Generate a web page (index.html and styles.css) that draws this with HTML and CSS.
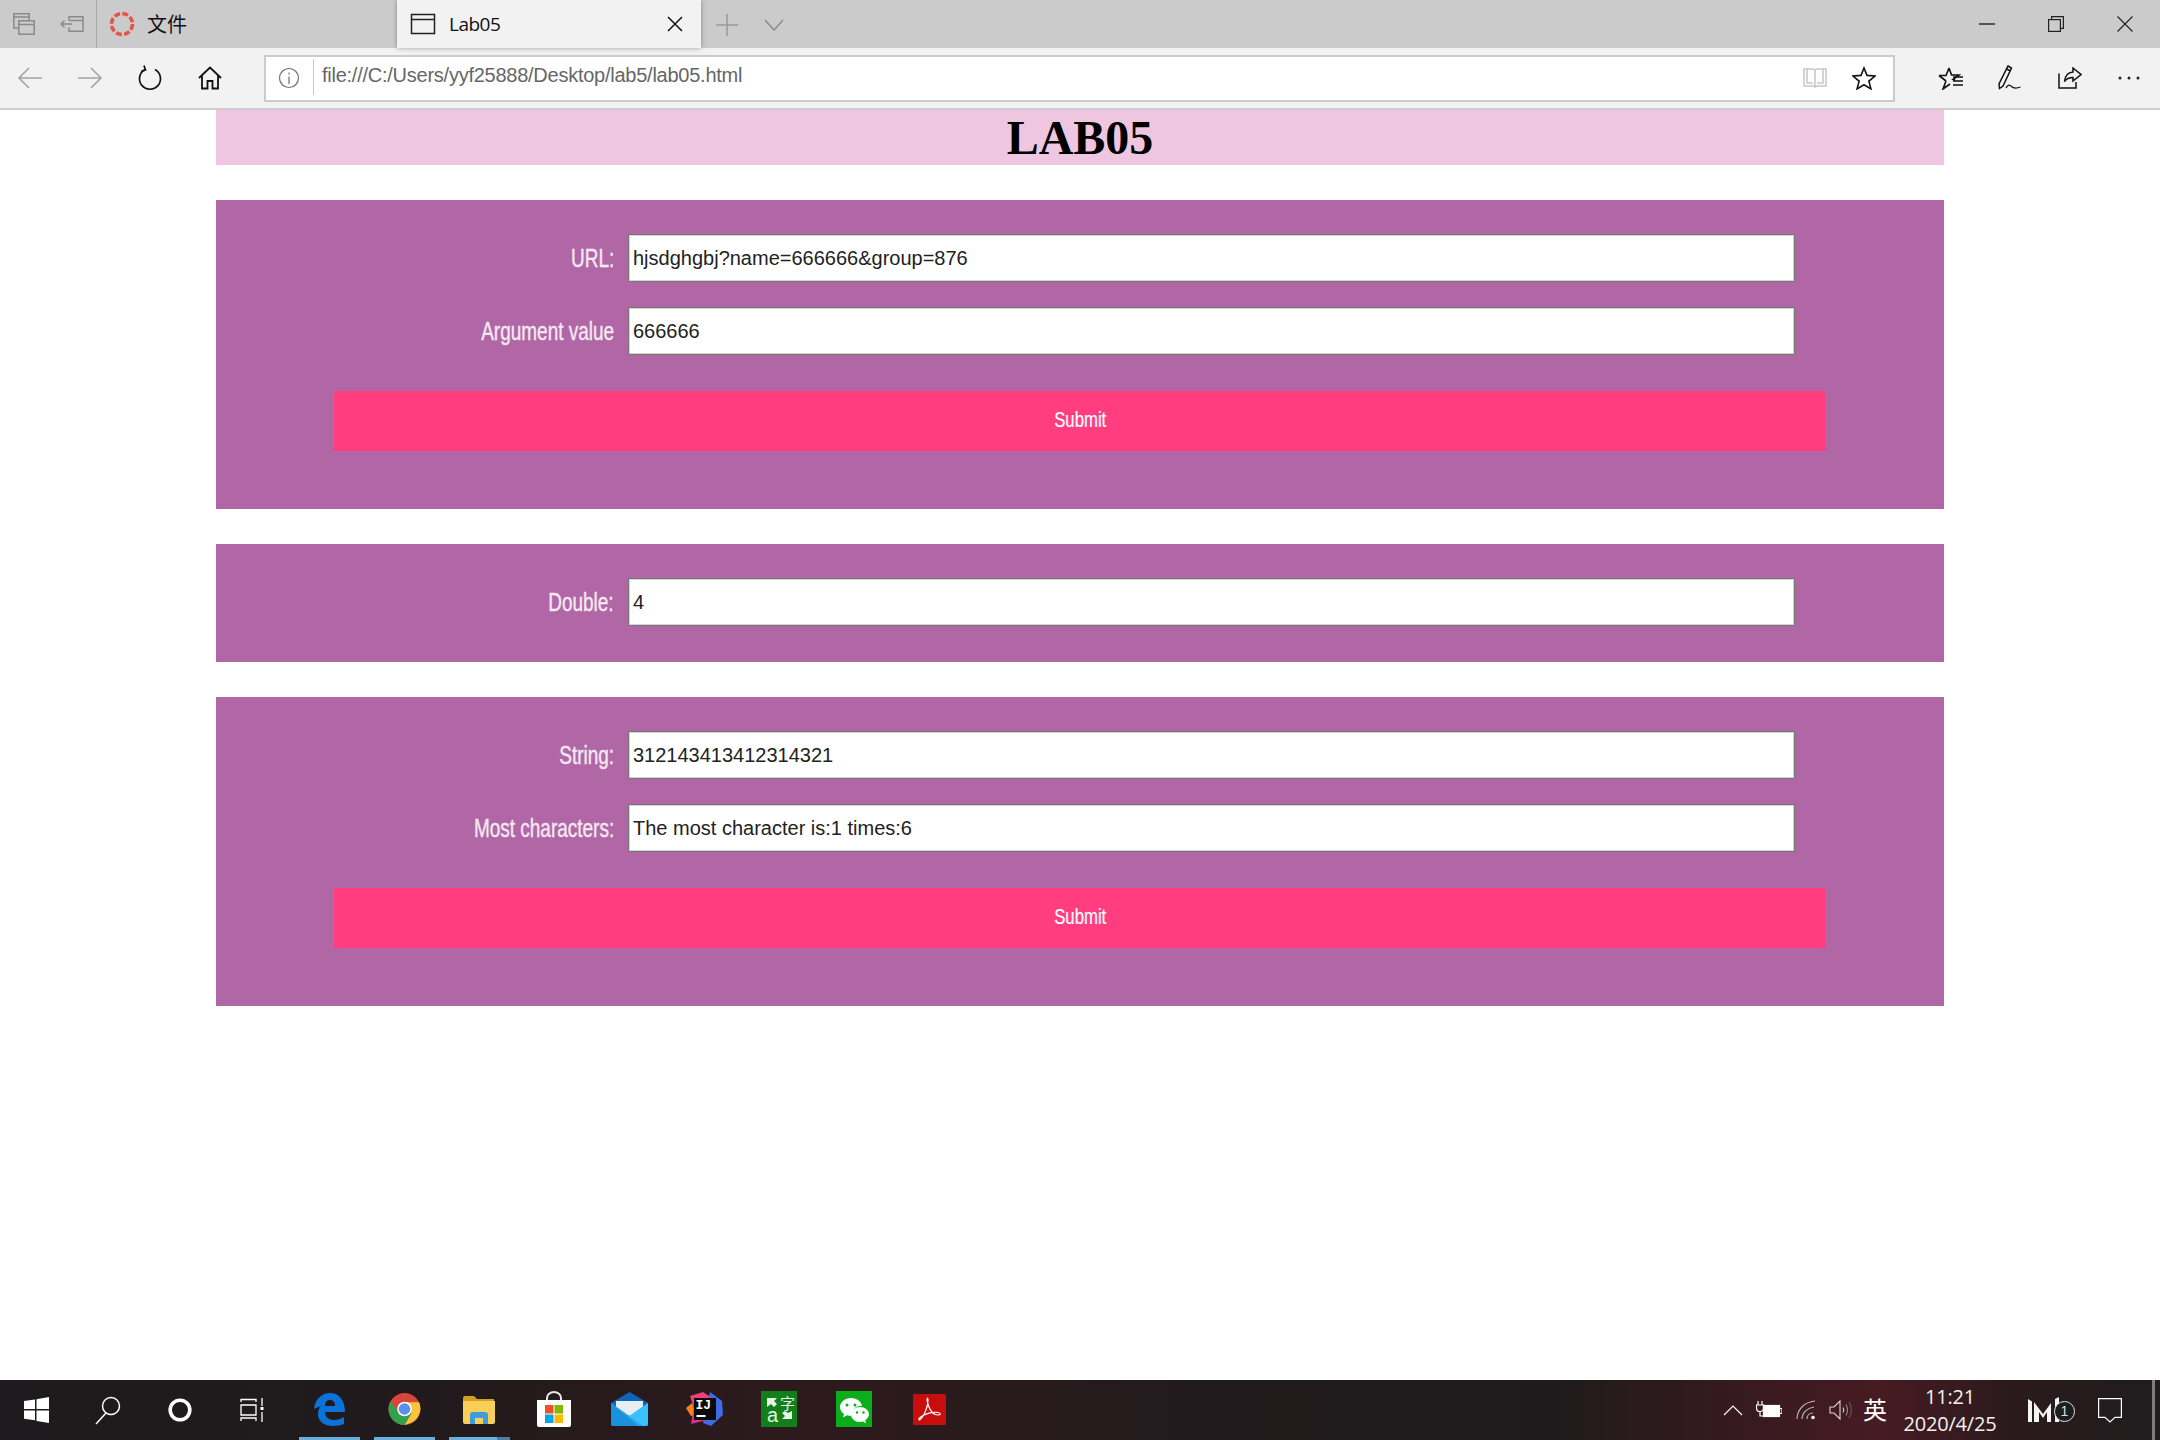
FILE: index.html
```html
<!DOCTYPE html>
<html lang="en">
<head>
<meta charset="utf-8">
<title>Lab05</title>
<link rel="stylesheet" href="styles.css">
</head>
<body>
<div class="tabstrip">
  <div class="strip-btn"><svg width="22" height="22" viewBox="0 0 22 22" fill="none" stroke="#8a8a8a" stroke-width="1.500"><path d="M5 15H.8V.8h15.400V7M.8 4h15.400"/><rect x="5.800" y="7.800" width="15.400" height="13.400"/><path d="M5.800 11.500h15.400"/></svg></div>
  <div class="strip-btn"><svg width="24" height="16" viewBox="0 0 24 16" fill="none" stroke="#8a8a8a" stroke-width="1.500"><path d="M9 4.500V.8h14v14.400H9V11.500M9 4.500h14M1 8h11M4.500 4.500L1 8l3.500 3.500"/></svg></div>
  <div class="tab-idle">
    <svg class="spin" width="26" height="26" viewBox="0 0 26 26" fill="none"><circle cx="13" cy="13" r="10.500" stroke="#e5534b" stroke-width="3.600" stroke-dasharray="6 2.250"/></svg>
    <span class="tab-title-cjk">文件</span>
  </div>
  <div class="tab-active">
    <svg width="26" height="22" viewBox="0 0 26 22" fill="none" stroke="#222" stroke-width="1.500"><rect x="1.500" y="1.500" width="23" height="19"/><path d="M1.500 6.500h23"/></svg>
    <span class="tab-title">Lab05</span>
    <svg class="tab-x" width="16" height="16" viewBox="0 0 16 16" stroke="#111" stroke-width="1.500"><path d="M1 1l14 14M15 1L1 15"/></svg>
  </div>
  <div class="strip-new strip-plus"><svg width="22" height="22" viewBox="0 0 22 22" stroke="#999" stroke-width="1.500"><path d="M11 0v22M0 11h22"/></svg></div>
  <div class="strip-new"><svg width="20" height="12" viewBox="0 0 20 12" fill="none" stroke="#8a8a8a" stroke-width="1.400"><path d="M1 1l9 10 9-10"/></svg></div>
  <div class="strip-fill"></div>
  <div class="win-btn"><svg width="16" height="2" viewBox="0 0 16 2" stroke="#222" stroke-width="1.400"><path d="M0 1h16"/></svg></div>
  <div class="win-btn"><svg width="16" height="16" viewBox="0 0 16 16" fill="none" stroke="#222" stroke-width="1.200"><rect x=".6" y="3.600" width="11.800" height="11.800"/><path d="M3.600 3.600V.6h11.800v11.800h-3"/></svg></div>
  <div class="win-btn win-last"><svg width="16" height="16" viewBox="0 0 16 16" stroke="#222" stroke-width="1.200"><path d="M.5.5l15 15M15.500.5l-15 15"/></svg></div>
</div>

<div class="toolbar">
  <div class="nav-btn"><svg width="26" height="24" viewBox="0 0 26 24" fill="none" stroke="#a3a3a3" stroke-width="1.600"><path d="M25 12H2M12 2L2 12l10 10"/></svg></div>
  <div class="nav-btn"><svg width="26" height="24" viewBox="0 0 26 24" fill="none" stroke="#a3a3a3" stroke-width="1.600"><path d="M1 12h23M14 2l10 10-10 10"/></svg></div>
  <div class="nav-btn"><svg width="26" height="26" viewBox="0 0 26 26" fill="none" stroke="#111" stroke-width="1.700"><path d="M8 4.500a10.500 10.500 0 1 0 10 0"/><path d="M7 0.500l1.500 4.500L4 6.500"/></svg></div>
  <div class="nav-btn"><svg width="24" height="24" viewBox="0 0 24 24" fill="none" stroke="#111" stroke-width="1.800"><path d="M1 12L12 1.500 23 12M4 10v12.500h5.500V15h5v7.500H20V10"/></svg></div>
  <div class="address">
    <svg class="info" width="22" height="22" viewBox="0 0 22 22" fill="none" stroke="#6e6e6e" stroke-width="1.200"><circle cx="11" cy="11" r="9.500"/><path d="M11 9.500V17M11 5.500v2"/></svg>
    <div class="addr-div"></div>
    <span class="url">file:///C:/Users/yyf25888/Desktop/lab5/lab05.html</span>
    <svg class="book" width="24" height="20" viewBox="0 0 24 20" fill="none" stroke="#c6c6c6" stroke-width="1.500"><path d="M1 1h9.500L12 2.500 13.500 1H23v17h-9l-2 1-2-1H1zM12 2.500V19M4 1v14h6M20 1v14h-6"/></svg>
    <svg class="star" width="24" height="24" viewBox="0 0 24 24" fill="none" stroke="#111" stroke-width="1.600"><path d="M12 2l3 7.400 8 .6-6.100 5.100 2 7.800L12 18.700l-6.900 4.200 2-7.800L1 10l8-.6z"/></svg>
  </div>
  <div class="tools">
    <div class="tool-btn"><svg width="26" height="24" viewBox="0 0 26 24" fill="none" stroke="#111" stroke-width="1.600"><path d="M11 2l2.500 7H21l-6 4.500 2 .5M8 15l-3 8 7-5M1 9.500h7L11 2M1 9.500l7 5.500M15 11h10M15 15h10M15 19h10"/></svg></div>
    <div class="tool-btn"><svg width="24" height="26" viewBox="0 0 24 26" fill="none" stroke="#111" stroke-width="1.500"><path d="M10 1l3.500 2L5 21l-3.500 2.500L1 19zM8 3.500l3.500 2"/><path d="M8 23c2-3.500 3.500-3.500 5.500-1.500s4 2.500 9 .5" stroke-width="1.300"/></svg></div>
    <div class="tool-btn"><svg width="24" height="22" viewBox="0 0 24 22" fill="none" stroke="#111" stroke-width="1.500"><path d="M1 6.500V21h17v-6"/><path d="M15 1l8 6.500-8 6.500v-3.500c-4 0-6.500 1-8.500 4 .5-6 3.500-9 8.500-9.500z"/></svg></div>
    <div class="tool-btn"><svg width="22" height="4" viewBox="0 0 22 4" fill="#222"><circle cx="2" cy="2" r="1.500"/><circle cx="11" cy="2" r="1.500"/><circle cx="20" cy="2" r="1.500"/></svg></div>
  </div>
</div>
<div class="chrome-line"></div>

<main class="page">
  <h1 class="title">LAB05</h1>

  <section class="panel">
    <div class="row"><label class="lbl"><span class="cond">URL:</span></label><input class="field" type="text" value="hjsdghgbj?name=666666&amp;group=876"></div>
    <div class="row row-next"><label class="lbl"><span class="cond">Argument value</span></label><input class="field" type="text" value="666666"></div>
    <div class="submit"><span class="cond-btn">Submit</span></div>
  </section>

  <section class="panel panel-short">
    <div class="row"><label class="lbl"><span class="cond">Double:</span></label><input class="field" type="text" value="4"></div>
  </section>

  <section class="panel">
    <div class="row"><label class="lbl"><span class="cond">String:</span></label><input class="field" type="text" value="312143413412314321"></div>
    <div class="row row-next"><label class="lbl"><span class="cond">Most characters:</span></label><input class="field" type="text" value="The most character is:1 times:6"></div>
    <div class="submit"><span class="cond-btn">Submit</span></div>
  </section>
</main>

<footer class="taskbar">
  <div class="sys-btn"><svg width="25" height="26" viewBox="0 0 25 26" fill="#fff"><path d="M0 4l11-1.600V12H0zM12.500 2.200L25 0v12H12.500zM0 13.500h11v9.700L0 21.700zM12.500 13.500H25V26l-12.500-2z"/></svg></div>
  <div class="sys-btn"><svg width="26" height="30" viewBox="0 0 26 30" fill="none" stroke="#fff" stroke-width="1.500"><circle cx="16" cy="11" r="8.500"/><path d="M11 18L1 29"/></svg></div>
  <div class="sys-btn"><svg width="24" height="24" viewBox="0 0 24 24" fill="none" stroke="#fff" stroke-width="3.600"><circle cx="12" cy="12" r="9.800"/></svg></div>
  <div class="sys-btn"><svg width="24" height="24" viewBox="0 0 24 24" fill="none" stroke="#fff" stroke-width="1.300"><path d="M1 4V1.500h15V4M1 7h15v10H1zM1 23v-3h15v3M22 0v8M22 14v10"/><rect x="20.500" y="9" width="3" height="3" fill="#fff" stroke="none"/></svg></div>
  <div class="apps">
    <div class="app on"><svg width="31" height="33" viewBox="0 0 31 33"><path fill="#0b72d8" fill-rule="evenodd" d="M0 16C1 6 8 0 16 0c9 0 15 7 15 19H11c0 6 5 8 9 8 4 0 7-1 10-3v7c-3 1-6 2-11 2C9 33 3 27 4 19c1-3 1-4 3-6-3 1-5 2-7 3zM11 13h10c0-4-2-6-5-6s-5 2-5 6z"/></svg></div>
    <div class="app on"><svg width="33" height="34" viewBox="0 0 34 34"><circle cx="17" cy="17" r="16.500" fill="#d8453a"/><path fill="#f6c53b" d="M17 10h15a16.500 16.500 0 0 1-7.500 21L17 33.500l7-12z"/><path fill="#30a24e" d="M2.500 9.200A16.500 16.500 0 0 0 17 33.500l7-12-7 2a7 7 0 0 1-6-3.500z"/><circle cx="17" cy="17" r="7.500" fill="#fff"/><circle cx="17" cy="17" r="6" fill="#5a8fef"/></svg></div>
    <div class="app on on-split"><svg width="34" height="29" viewBox="0 0 34 29"><path fill="#d59f1e" d="M1 3a2 2 0 0 1 2-2h9l3 3h17v5H1z"/><path fill="#f8cf58" d="M1 6h32v21a2 2 0 0 1-2 2H3a2 2 0 0 1-2-2z"/><path fill="#3f9bdc" d="M8 29V20a3 3 0 0 1 3-3h12a3 3 0 0 1 3 3v9h-5v-6h-8v6z"/></svg></div>
    <div class="app"><svg width="36" height="36" viewBox="0 0 36 36"><path fill="none" stroke="#e8e8e8" stroke-width="2" d="M11 10V7a7 6 0 0 1 14 0v3"/><path fill="#fff" d="M1 9h34v25a2 2 0 0 1-2 2H3a2 2 0 0 1-2-2z"/><rect x="9" y="14" width="8.500" height="8.500" fill="#f25022"/><rect x="18.500" y="14" width="8.500" height="8.500" fill="#7fba00"/><rect x="9" y="23.500" width="8.500" height="8.500" fill="#00a4ef"/><rect x="18.500" y="23.500" width="8.500" height="8.500" fill="#ffb900"/></svg></div>
    <div class="app"><svg width="37" height="34" viewBox="0 0 37 34"><path fill="#0d66b8" d="M0 11L18.500 0 37 11v6H0z"/><path fill="#e9edf2" d="M5 9h27v10L18.500 24 5 19z"/><path fill="#2aa6ec" d="M0 11l18.500 13L37 11v21a2 2 0 0 1-2 2H2a2 2 0 0 1-2-2z"/><path fill="#37c2fb" d="M37 11v21a2 2 0 0 1-2 2h-3L15 22l3.500 2z"/><path fill="#1484d6" d="M0 32V11l27 23H2a2 2 0 0 1-2-2z" opacity=".65"/></svg></div>
    <div class="app"><svg width="37" height="36" viewBox="0 0 37 36"><path fill="#ef3f7c" d="M4 5l13-4 9 6-8 10-9 3z"/><path fill="#f58220" d="M0 17l6-5 5 14-6-1z"/><path fill="#3f6be6" d="M24 1l12 9 1 14-12 11-8-3z"/><path fill="#dd2e8c" d="M5 33l4-22 12 18z"/><rect x="8" y="7" width="22" height="22" fill="#0b0b0d"/><text x="9.500" y="17.500" class="idea-txt">IJ</text><rect x="10.500" y="24" width="9" height="2" fill="#fff"/></svg></div>
    <div class="app"><svg width="36" height="36" viewBox="0 0 36 36"><rect width="36" height="36" fill="#127f1a"/><path fill="#e6f2e6" d="M6 7h10l-3 3 3 3-3 3-3-3-4 3zM31 28H21l3-3-3-3 3-2 3 2 4-2z"/><text x="19" y="18" class="tile-cjk">字</text><text x="6" y="31" class="tile-a">a</text></svg></div>
    <div class="app"><svg width="36" height="36" viewBox="0 0 36 36"><rect width="36" height="36" fill="#0aae1b"/><path fill="#fff" d="M15 7C9 7 4 11 4 16c0 3 1.500 5 4 7l-1 3.500 4-2.200c1.500.4 3 .7 5 .5-1-5 3-10 10-10C25 10 20 7 15 7z"/><path fill="#fff" d="M24 16c-5 0-9 3.300-9 7.500s4 7.500 9 7.500c1 0 2-.2 3-.5l3 1.700-.8-3c2-1.500 3.800-3.500 3.800-5.700 0-4.200-4-7.500-9-7.500z"/><circle cx="11" cy="14" r="1.500" fill="#0aae1b"/><circle cx="19" cy="14" r="1.500" fill="#0aae1b"/><circle cx="21" cy="21.500" r="1.200" fill="#0aae1b"/><circle cx="27.500" cy="21.500" r="1.200" fill="#0aae1b"/></svg></div>
    <div class="app"><svg width="33" height="31" viewBox="0 0 33 31"><rect width="33" height="31" rx="1" fill="#c80d0d"/><path fill="none" stroke="#fff" stroke-width="1.200" d="M15 4c-1.500 0 -1 4 1 9 2 5 5 8 9 8 3 0 3-2 0-2.500-5-1-13 1-18 5-2 2-1 3 0 2 4-3 8-13 8-19 0-2-.500-2.500 0-2.500z"/></svg></div>
  </div>
  <div class="tray">
    <div class="tray-item tray-caret"><svg width="20" height="11" viewBox="0 0 20 11" fill="none" stroke="#fff" stroke-width="1.200"><path d="M1 10l9-9 9 9"/></svg></div>
    <div class="tray-item tray-bat"><svg width="26" height="18" viewBox="0 0 26 18" fill="none" stroke="#fff" stroke-width="1.200"><path d="M2 0v4M6 0v4M.500 4h7v3a3.500 3.500 0 0 1-7 0zM4 10v5h4"/><rect x="7.500" y="4.500" width="16" height="11" fill="#fff"/><path d="M24 7.500h2v5h-2"/></svg></div>
    <div class="tray-item tray-wifi"><svg width="20" height="20" viewBox="0 0 20 20" fill="none" stroke="#bbb" stroke-width="1.100"><path d="M1 19C1 10 8 2 19 1M6 19c0-6 5-11 12-12M11 19c0-3 2-6 6-6"/><circle cx="17" cy="17.500" r="1.800" fill="#fff" stroke="none"/></svg></div>
    <div class="tray-item tray-vol"><svg width="24" height="20" viewBox="0 0 24 20" fill="none" stroke="#d8d8d8" stroke-width="1.100"><path d="M1 7v6h4l6 6V1L5 7z"/><path d="M14 7.500c1 1.500 1 3.500 0 5"/><path d="M17 4.500c2 3 2 8 0 11" stroke="#9a8a8a"/><path d="M20 2c3 4.500 3 11.500 0 16" stroke="#6e5a5e"/></svg></div>
    <div class="tray-ime">英</div>
    <div class="clock"><span>11:21</span><span>2020/4/25</span></div>
    <div class="tray-im"><svg width="32" height="26" viewBox="0 0 32 26" fill="#f4f4f4"><path d="M0 2l4 2.500V25H0zM6 5l9 12 8-11v19h-4V15l-4 6-4-6v10H6zM27 2l4-2v25h-4z"/></svg><span class="badge">1</span></div>
    <div class="tray-note"><svg width="24" height="25" viewBox="0 0 24 25" fill="none" stroke="#fff" stroke-width="1.200"><path d="M.6.600h22.800v18.800H17L12 24l-5-4.600H.6z"/></svg></div>
    <div class="show-desk"></div>
  </div>
</footer>
</body>
</html>
```

FILE: styles.css
```css
* { box-sizing: border-box; }
html, body { margin: 0; height: 100%; }
body {
  display: flex;
  flex-direction: column;
  height: 1440px;
  overflow: hidden;
  background: #fff;
  font-family: "Liberation Sans", Arial, sans-serif;
}
svg { display: block; flex: none; }

/* tab strip */
.tabstrip { display: flex; height: 48px; background: #cbcbcb; align-items: stretch; }
.strip-btn { width: 48px; display: flex; align-items: center; justify-content: center; }
.tab-idle {
  width: 301px;
  border-left: 1px solid #a8a8a8;
  display: flex;
  align-items: center;
  padding-left: 12px;
  gap: 12px;
}
.tab-title-cjk { font: 20px "Noto Sans CJK SC", sans-serif; color: #111; margin-top: -2px; }
.tab-active {
  width: 304px;
  background: #f2f2f2;
  display: flex;
  align-items: center;
  padding-left: 13px;
  box-shadow: 0 0 5px rgba(0,0,0,.35);
  position: relative;
}
.tab-title { font: 19px "Open Sans", sans-serif; color: #111; margin-left: 13px; letter-spacing: -.5px; }
.tab-x { margin-left: auto; margin-right: 18px; }
.strip-new { width: 47px; display: flex; align-items: center; justify-content: center; margin-top: 2px; }
.strip-plus { margin-left: 2px; }
.strip-fill { flex: 1; }
.win-btn { width: 69px; display: flex; align-items: center; justify-content: center; }
.win-last { margin-right: 1px; }

/* toolbar */
.toolbar { display: flex; height: 60px; background: #f2f2f2; align-items: center; }
.nav-btn { width: 60px; height: 60px; display: flex; align-items: center; justify-content: center; }
.address {
  width: 1631px;
  height: 47px;
  margin-left: 24px;
  background: #fff;
  border: 2px solid #cbcbcb;
  display: flex;
  align-items: center;
}
.info { margin-left: 12px; }
.addr-div { width: 1px; height: 36px; background: #c8c8c8; margin-left: 13px; margin-top: -3px; }
.url { font-size: 20px; color: #666; margin-left: 8px; margin-top: -6px; white-space: nowrap; letter-spacing: -.25px; }
.book { margin-left: auto; }
.star { margin-left: 25px; margin-right: 17px; }
.tools { display: flex; margin-left: 26px; }
.tool-btn { width: 59.500px; height: 60px; display: flex; align-items: center; justify-content: center; }
.chrome-line { height: 2px; background: #cfcfcf; }

/* page */
.page { flex: 1; width: 1728px; margin: 0 auto; min-height: 0; }
.title {
  margin: 0 0 35px;
  height: 55px;
  background: #efc6e0;
  text-align: center;
  font: bold 48px/55px "Liberation Serif", "Times New Roman", serif;
  color: #000;
}
.panel { background: #b167a5; height: 309px; padding-top: 34px; margin-bottom: 35px; }
.panel-short { height: 118px; }
.row { display: grid; grid-template-columns: 398px 1167px; column-gap: 14px; align-items: center; height: 48px; }
.row-next { margin-top: 25px; }
.lbl { text-align: right; }
.cond {
  display: inline-block;
  transform: scaleX(.73);
  transform-origin: right center;
  color: #f5e8f3;
  font: 26px "Liberation Sans", sans-serif;
  -webkit-text-stroke: .4px #f5e8f3;
  white-space: nowrap;
}
.field {
  width: 100%;
  height: 100%;
  background: #fff;
  border: 1px solid #767676;
  box-shadow: inset 0 0 0 1px #d4d4d4;
  padding: 0 4px;
  font: 20px "Liberation Sans", Arial, sans-serif;
  color: #222;
  outline: none;
  border-radius: 0;
}
.submit {
  margin: 36px 118px 0;
  height: 60px;
  background: #ff3d7f;
  display: flex;
  align-items: center;
  justify-content: center;
}
.cond-btn {
  display: inline-block;
  transform: scaleX(.76);
  color: #fff;
  font: 22px "Liberation Sans", sans-serif;
  -webkit-text-stroke: .2px #fff;
  margin-top: -2px;
}

/* taskbar */
.taskbar {
  height: 60px;
  display: flex;
  align-items: stretch;
  color: #fff;
  background: linear-gradient(90deg, #1d1b1d 0, #211a1c 20%, #2e1a1d 38%, #221b1d 55%, #1f1b1c 72%, #3a1a20 82%, #471b22 87%, #2b1a1d 93%, #1f1d1e 100%);
}
.sys-btn { width: 72px; display: flex; align-items: center; justify-content: center; }
.apps { display: flex; margin-left: 3.500px; }
.app { width: 75px; display: flex; align-items: center; justify-content: center; position: relative; margin-top: -2px; }
.on::after {
  content: "";
  position: absolute;
  left: 7px; right: 7px; bottom: 0;
  height: 3px;
  background: #6aaedc;
}
.on-split::after { background: linear-gradient(90deg, #6aaedc 78%, #4a7ea3 78%); }
.idea-txt { font: bold 13px "Liberation Mono", monospace; fill: #fff; }
.tile-cjk { font: 15px "Noto Sans CJK SC", sans-serif; fill: #e6f2e6; }
.tile-a { font: 20px "Liberation Sans", sans-serif; fill: #e6f2e6; }
.tray { margin-left: auto; display: flex; align-items: center; }
.tray-item { display: flex; justify-content: center; }
.tray-caret { width: 36px; }
.tray-bat { width: 36px; }
.tray-wifi { width: 38px; }
.tray-vol { width: 32px; }
.tray-ime { width: 36px; text-align: center; font: 24px "Noto Sans CJK SC", sans-serif; color: #fff; margin-top: -4px; }
.clock { width: 112px; display: flex; flex-direction: column; align-items: center; font: 20px/27px "Open Sans", sans-serif; letter-spacing: -.2px; color: #f2f2f2; margin-left: 1px; }
.tray-im { width: 73px; position: relative; display: flex; justify-content: center; margin-left: 1px; }
.badge {
  position: absolute;
  left: 47px; top: 4px;
  width: 21px; height: 21px;
  border-radius: 50%;
  border: 1.500px solid #e4e4e4;
  background: #1d1d1f;
  color: #ddd;
  font: 14px/18px "Liberation Sans", sans-serif;
  text-align: center;
}
.tray-note { width: 60px; display: flex; justify-content: center; margin-right: 12px; }
.show-desk { width: 3px; height: 60px; background: #7d7d7d; margin-right: 5px; }
```
